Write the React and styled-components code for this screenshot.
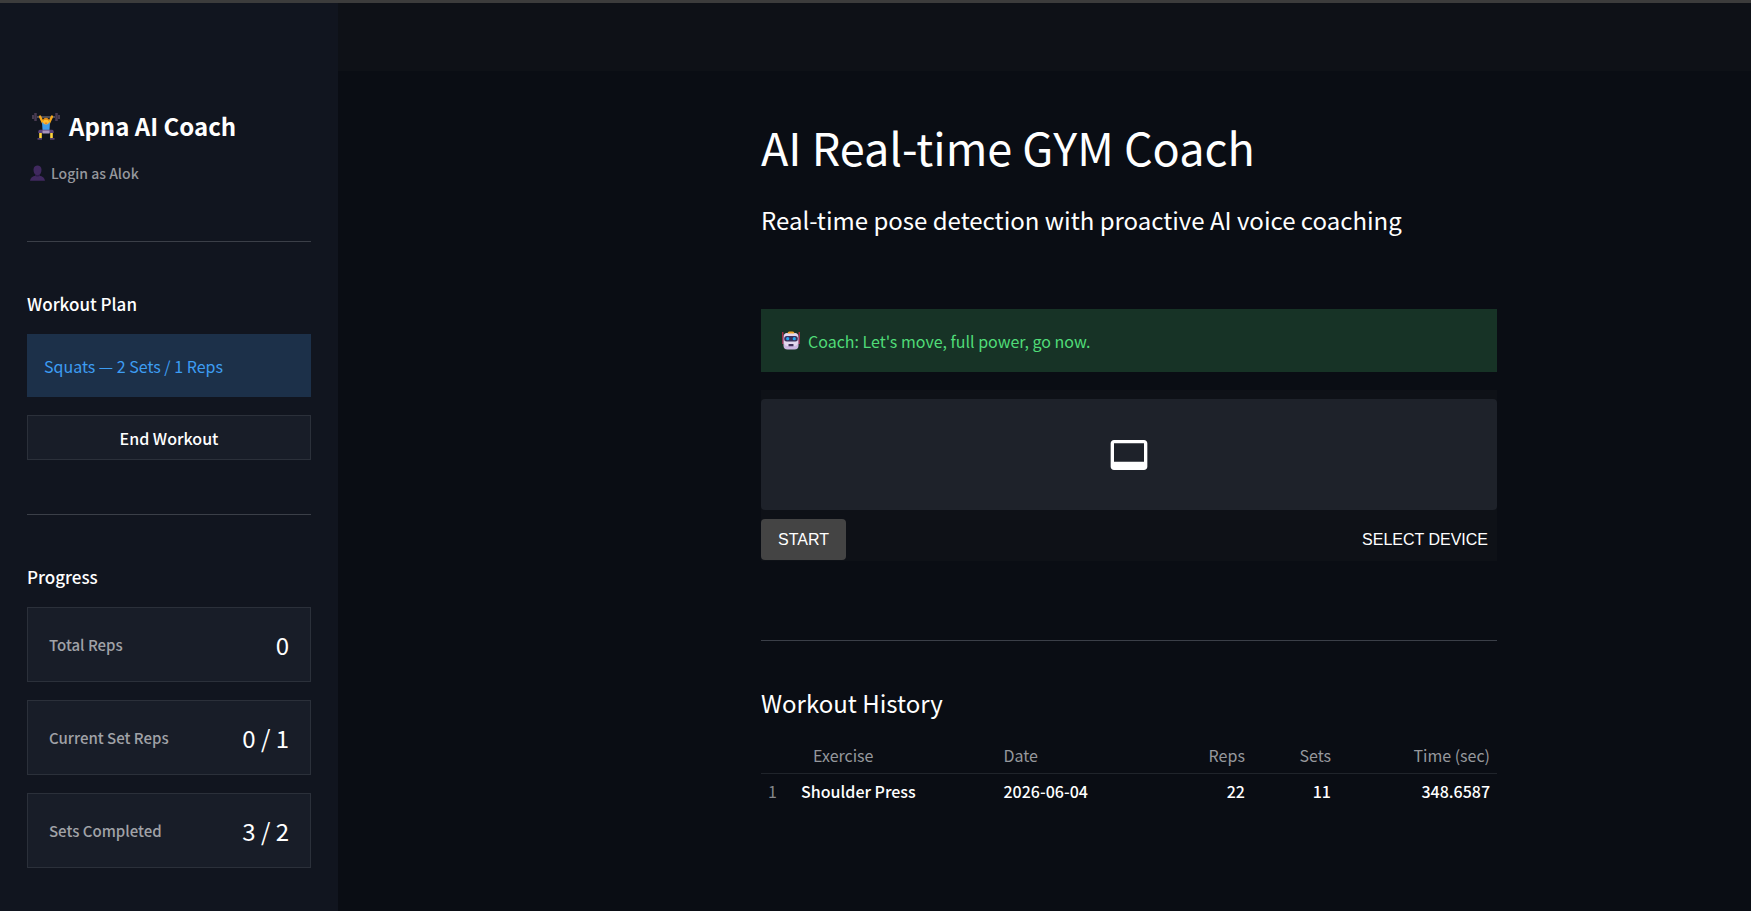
import React from "react";
import styled, { createGlobalStyle } from "styled-components";

const GlobalStyle = createGlobalStyle`
* {
  box-sizing: border-box;
}
body {
  margin: 0;
  background: #0a0d14;
  color: #ffffff;
  font-family: 'Noto Sans CJK SC', 'Noto Sans', sans-serif;
  font-size: 16px;
  line-height: 24px;
}
h1, h2, h3, p {
  margin: 0;
}
`

const Page = styled.div`
display: flex;
min-height: 100vh;
border-top: 3px solid #3c3c3c;
`

const Sidebar = styled.aside`
flex: 0 0 338px;
padding: 103px 27px 40px;
background: #11151f;
`

const Content = styled.div`
flex: 1;
min-width: 0;
`

const TopBar = styled.header`
height: 68px;
background: #0e1117;
`

const Main = styled.main`
max-width: 905px;
margin: 0 auto;
padding: 46px 0 48px 169px;
`

const Brand = styled.h2`
display: flex;
align-items: center;
gap: 9px;
padding-left: 5px;
font-size: 24px;
line-height: 40px;
font-weight: 700;
`

const Login = styled.p`
display: flex;
align-items: center;
gap: 6px;
margin-top: 15px;
padding-left: 3px;
color: #96989d;
font-size: 14px;
font-weight: 500;
`

const Divider = styled.hr`
height: 1px;
margin: ${props => props.$space};
border: 0;
background: #3b3f48;
`

const SideHeading = styled.h3`
margin-bottom: 18px;
font-size: 17px;
font-weight: 500;
`

const Alert = styled.div`
display: flex;
align-items: center;
gap: 8px;
height: 63px;
padding: 0 ${props => props.$green ? "21px" : "17px"};
background: ${props => props.$green ? "#173326" : "#1c3049"};
color: ${props => props.$green ? "#50dc78" : "#3d9df3"};
`

const EndButton = styled.button`
display: block;
width: 100%;
height: 45px;
margin-top: 18px;
border: 1px solid #2b303a;
background: #181d28;
color: #ffffff;
font: inherit;
font-weight: 500;
`

const Metric = styled.div`
display: flex;
align-items: center;
justify-content: space-between;
height: 75px;
padding: 0 21px;
border: 1px solid #2b303a;
background: #181d28;
color: #a0a2a7;
font-size: 15px;
font-weight: 500;
& + & {
  margin-top: 18px;
}
strong {
  color: #ffffff;
  font-size: 24px;
  font-weight: 400;
}
`

const Title = styled.h1`
font-size: 45px;
line-height: 60px;
font-weight: 400;
`

const Subtitle = styled.p`
margin: 27px 0 73px;
font-size: 24px;
line-height: 32px;
`

const Player = styled.section`
margin-top: 18px;
padding: 9px 0 1px;
background: #0e1117;
`

const Video = styled.div`
display: flex;
align-items: center;
justify-content: center;
height: 111px;
border-radius: 4px;
background: #1e222a;
`

const Controls = styled.div`
display: flex;
justify-content: space-between;
padding-top: 9px;
`

const PlayerButton = styled.button`
height: 41px;
padding: 0 ${props => props.$filled ? "17px" : "9px"};
border: 0;
border-radius: 4px;
background: ${props => props.$filled ? "#444444" : "transparent"};
color: #ffffff;
font-family: 'Liberation Sans', Arial, sans-serif;
font-size: 16px;
`

const HistoryTitle = styled.h2`
font-size: 24px;
line-height: 32px;
font-weight: 400;
`

const HistoryTable = styled.table`
width: 100%;
margin-top: 18px;
border-collapse: collapse;
table-layout: fixed;
th, td {
  height: 36px;
  padding: 0 7px;
  text-align: left;
  font-weight: 500;
}
thead th {
  border-bottom: 1px solid #20242b;
  color: #96989d;
  font-weight: 400;
}
thead th:nth-child(2) {
  padding-left: 19px;
}
th:nth-child(n + 4), td:nth-child(n + 4) {
  text-align: right;
}
tbody th {
  color: #85878b;
  font-weight: 400;
}
`

const Lifter = () => (
  <svg width="28" height="28" viewBox="0 0 28 28" aria-hidden="true">
    <path d="M5 5h18" stroke="#8b8790" strokeWidth="1" />
    <path d="M1 3v4M27 3v4" stroke="#5a4a63" strokeWidth="1.5" />
    <path d="M3.5 1v8M24.5 1v8" stroke="#483a52" strokeWidth="2.5" />
    <path d="M8 4.500l3 6.500M20 4.500l-3 6.500" stroke="#f6a81c" strokeWidth="2.4" strokeLinecap="round" />
    <path d="M10 10.500h8l-.6 9h-6.800z" fill="#3f9be8" />
    <circle cx="14" cy="9.500" r="3" fill="#ffbe2e" />
    <path d="M11 8.800c0-4 6-4 6 0-1.500-1.300-4.500-1.300-6 0z" fill="#e58d13" />
    <path d="M12.800 11.200h2.400" stroke="#d7502c" strokeWidth=".8" />
    <path d="M8 17.800h12q2 0 1.700 3.200h-4l-2-.5h-3.400l-2 .5h-4q-.3-3.200 1.700-3.200z" fill="#5b437a" />
    <path d="M10.500 18.500h7v3h-7z" fill="#a792bd" />
    <path d="M8.500 21v5M19.500 21v5" stroke="#ffd43d" strokeWidth="2.6" />
    <path d="M5.500 26.800h4.500M18 26.800h4.500" stroke="#55406c" strokeWidth="1.8" />
  </svg>
)

const Person = () => (
  <svg width="15" height="16" viewBox="0 0 15 16" aria-hidden="true">
    <path d="M3.5 4.500C3.500-1 11.500-1 11.500 4.500c0 3-1 4.500-2 5.200v1c3 .3 5 2 5.500 5H0c.5-3 2.500-4.700 5.500-5v-1c-1-.7-2-2.200-2-5.200z" fill="#40295f" />
    <path d="M5.500 9.500q2 1.300 4 0v1.400q-2 1.200-4 0z" fill="#2d1b4b" />
  </svg>
)

const Robot = () => (
  <svg width="18" height="19" viewBox="0 0 18 19" aria-hidden="true">
    <path d="M.8 1v12M17.200 1v12" stroke="#c52d50" strokeWidth="1.2" />
    <rect x="0" y="7" width="3" height="6" rx="1" fill="#8b3552" />
    <rect x="15" y="7" width="3" height="6" rx="1" fill="#8b3552" />
    <rect x="1.5" y="2" width="15" height="16.5" rx="4" fill="#cdb8e2" />
    <rect x="2" y="2" width="14" height="13" rx="4" fill="#e3d8ee" />
    <path d="M5.500 2.500q0-2 2-2h3q2 0 2 2z" fill="#f0a52c" />
    <rect x="2.2" y="5" width="13.6" height="5.500" rx="2.500" fill="#39315c" />
    <circle cx="5.700" cy="7.700" r="1.600" fill="#25a7ed" />
    <circle cx="12.300" cy="7.700" r="1.600" fill="#25a7ed" />
    <rect x="6.500" y="13" width="5" height="2.200" rx=".5" fill="#40315a" />
  </svg>
)

const VideoLabel = () => (
  <svg width="40" height="40" viewBox="0 0 24 24" fill="#ffffff" aria-hidden="true">
    <path d="M21 3H3c-1.100 0-2 .9-2 2v14c0 1.100.9 2 2 2h18c1.100 0 2-.9 2-2V5c0-1.100-.9-2-2-2zm0 13H3V5h18v11z" />
  </svg>
)

const metrics = [
  { label: "Total Reps", value: "0" },
  { label: "Current Set Reps", value: "0 / 1" },
  { label: "Sets Completed", value: "3 / 2" },
]

const history = [
  { exercise: "Shoulder Press", date: "2026-06-04", reps: 22, sets: 11, time: 348.6587 },
]

function App() {
  return (
    <>
      <GlobalStyle />
      <Page>
        <Sidebar>
          <Brand><Lifter />Apna AI Coach</Brand>
          <Login><Person />Login as Alok</Login>

          <Divider $space="56px 0 50px" />

          <SideHeading>Workout Plan</SideHeading>
          <Alert>Squats — 2 Sets / 1 Reps</Alert>
          <EndButton type="button">End Workout</EndButton>

          <Divider $space="54px 0 50px" />

          <SideHeading>Progress</SideHeading>
          {metrics.map(metric => (
            <Metric key={metric.label}>
              <span>{metric.label}</span>
              <strong>{metric.value}</strong>
            </Metric>
          ))}
        </Sidebar>

        <Content>
          <TopBar />
          <Main>
            <Title>AI Real-time GYM Coach</Title>
            <Subtitle>Real-time pose detection with proactive AI voice coaching</Subtitle>

            <Alert $green><Robot />Coach: Let's move, full power, go now.</Alert>

            <Player>
              <Video><VideoLabel /></Video>
              <Controls>
                <PlayerButton type="button" $filled>START</PlayerButton>
                <PlayerButton type="button">SELECT DEVICE</PlayerButton>
              </Controls>
            </Player>

            <Divider $space="79px 0 46px" />

            <HistoryTitle>Workout History</HistoryTitle>
            <HistoryTable>
              <colgroup>
                <col width="4.5%" />
                <col width="27.5%" />
                <col width="22%" />
                <col width="12.7%" />
                <col width="11.7%" />
                <col />
              </colgroup>
              <thead>
                <tr>
                  <th aria-label="Row" />
                  <th>Exercise</th>
                  <th>Date</th>
                  <th>Reps</th>
                  <th>Sets</th>
                  <th>Time (sec)</th>
                </tr>
              </thead>
              <tbody>
                {history.map((row, index) => (
                  <tr key={row.date}>
                    <th>{index + 1}</th>
                    <td>{row.exercise}</td>
                    <td>{row.date}</td>
                    <td>{row.reps}</td>
                    <td>{row.sets}</td>
                    <td>{row.time}</td>
                  </tr>
                ))}
              </tbody>
            </HistoryTable>
          </Main>
        </Content>
      </Page>
    </>
  )
}

export default App;
